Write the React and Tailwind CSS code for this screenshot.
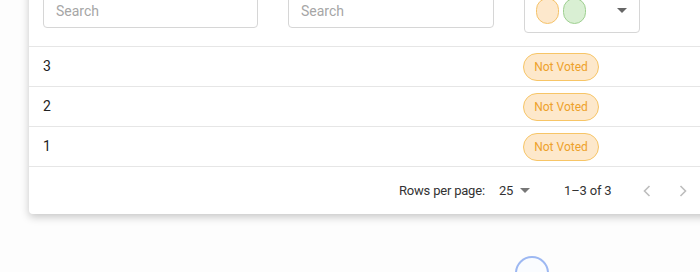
import React from "react";

function Badge() {
  return (
    <span className="inline-flex h-[28px] w-[76px] items-center justify-center rounded-full border border-[#f7c566] bg-[#fde8cb] text-[12px] text-[#eda12a]">
      Not Voted
    </span>
  );
}

function Row({ n }) {
  return (
    <div className="flex h-[40px] items-center border-b border-[#e6e6e6]">
      <div className="w-[494px] pl-[14px] text-[14px] text-[#222]">{n}</div>
      <Badge />
    </div>
  );
}

function Chevron({ dir }) {
  return (
    <svg width="24" height="24" viewBox="0 0 24 24" className="block">
      {dir === "left" ? (
        <polyline points="14.5,7 9.5,12 14.5,17" fill="none" stroke="#bdbdbd" strokeWidth="1.6" />
      ) : (
        <polyline points="9.5,7 14.5,12 9.5,17" fill="none" stroke="#bdbdbd" strokeWidth="1.6" />
      )}
    </svg>
  );
}

function Caret({ color = "#666" }) {
  return (
    <svg width="10" height="5" viewBox="0 0 10 5" className="block">
      <polygon points="0,0 10,0 5,5" fill={color} />
    </svg>
  );
}

export default function App() {
  return (
    <div
      className="relative h-[272px] w-[700px] overflow-hidden bg-[#fdfdfd]"
      style={{ fontFamily: "Roboto, 'Liberation Sans', sans-serif" }}
    >
      <div className="ml-[29px] mt-[-19px] w-[700px] rounded-[4px] bg-white shadow-[0_3px_8px_rgba(0,0,0,0.22)]">
        <div className="flex h-[66px] items-start gap-[30px] border-b border-[#e6e6e6] pl-[14px] pt-[7px]">
          <div className="flex h-[40px] w-[215px] items-center rounded-[4px] border border-[#d6d6d6] pl-[12px] pt-[6px] text-[14px] text-[#a6a6a6]">
            Search
          </div>
          <div className="flex h-[40px] w-[206px] items-center rounded-[4px] border border-[#d6d6d6] pl-[12px] pt-[6px] text-[14px] text-[#a6a6a6]">
            Search
          </div>
          <div className="flex h-[45px] w-[116px] items-center rounded-[4px] border border-[#d6d6d6] pl-[11px] pr-[12px]">
            <span className="h-[26px] w-[23px] rounded-full border border-[#f5c36a] bg-[#fde8cc]" />
            <span className="ml-[4px] h-[26px] w-[23px] rounded-full border border-[#9fd091] bg-[#d9efd3]" />
            <span className="ml-auto">
              <Caret />
            </span>
          </div>
        </div>
        <Row n="3" />
        <Row n="2" />
        <Row n="1" />
        <div className="flex h-[47px] items-center pl-[370px] text-[13px] tracking-[-0.2px] text-[#333]">
          <span>Rows per page:</span>
          <span className="ml-[14px]">25</span>
          <span className="ml-[7px]">
            <Caret color="#777" />
          </span>
          <span className="ml-[34px]">1–3 of 3</span>
          <span className="ml-[24px]">
            <Chevron dir="left" />
          </span>
          <span className="ml-[12px]">
            <Chevron dir="right" />
          </span>
        </div>
      </div>
      <div className="absolute left-[515px] top-[256px] h-[34px] w-[34px] rounded-full border-2 border-[#9db8f2] bg-[#fafcff]" />
    </div>
  );
}
